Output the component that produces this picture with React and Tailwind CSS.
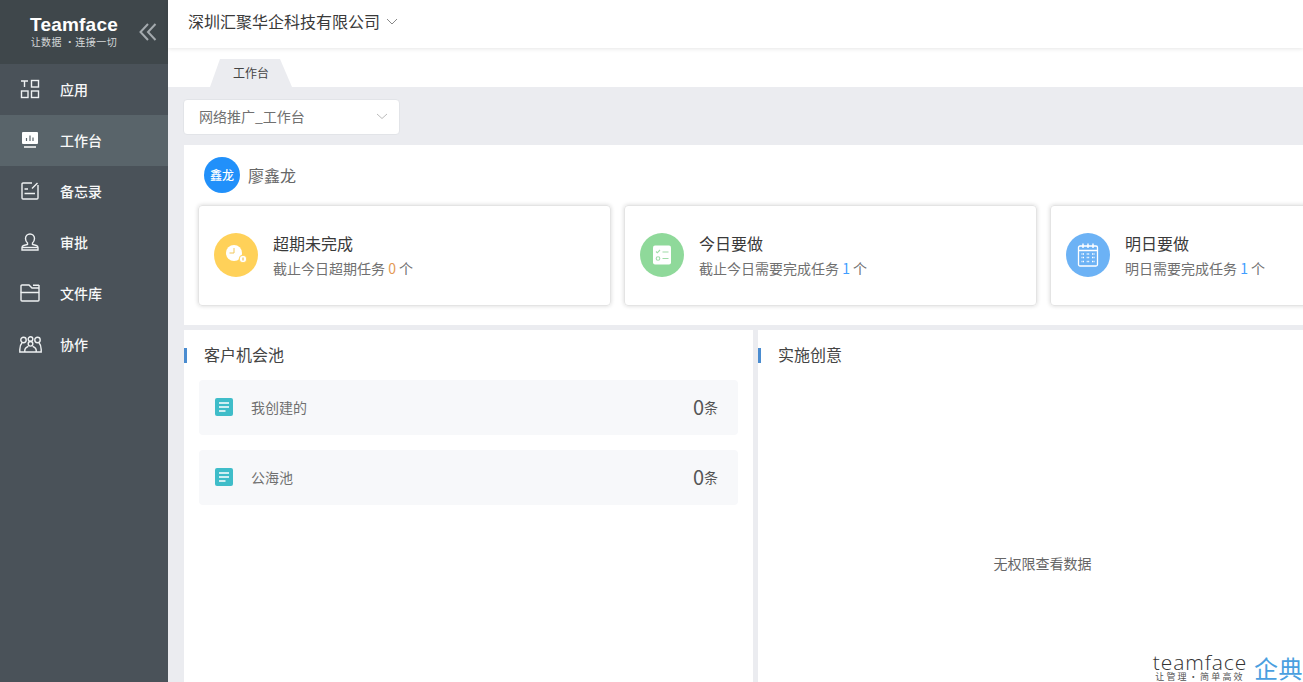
const cjk = { fontFamily: '"Noto Sans CJK SC", "Noto Sans", sans-serif' };

const s = { fill: 'none', stroke: '#eef1f2', strokeWidth: 1.4 };

const icons = {
  app: (
    <svg width="20" height="20" viewBox="0 0 20 20" {...s}>
      <path d="M1 2h7M4.500 2v6" />
      <rect x="11.500" y="1.500" width="7" height="6.500" />
      <rect x="1.500" y="12" width="6.500" height="6.500" />
      <rect x="11.500" y="12" width="7" height="6.500" />
    </svg>
  ),
  desk: (
    <svg width="18" height="18" viewBox="0 0 18 18">
      <rect x="1" y="1" width="16" height="12" rx="1" fill="#fff" />
      <path d="M5.500 10V7M9 10V4.500M12 10V6.500" stroke="#59646a" strokeWidth="1.200" />
      <path d="M3 16h12" stroke="#fff" strokeWidth="1.500" />
    </svg>
  ),
  memo: (
    <svg width="18" height="18" viewBox="0 0 18 18" {...s}>
      <path d="M11 1H2a1 1 0 0 0-1 1v14a1 1 0 0 0 1 1h14a1 1 0 0 0 1-1V3" />
      <path d="M16.500 1 11 6.500M3.500 7H7M3.500 11.500H14" />
    </svg>
  ),
  approve: (
    <svg width="18" height="18" viewBox="0 0 18 18" {...s}>
      <path d="M6.500 11.500V10C5.200 8.800 4.500 7.300 4.500 5.500a4.500 4.500 0 0 1 9 0c0 1.800-.7 3.300-2 4.500v1.500l3.800 1c1 .3 1.700 1 1.700 2V17H1v-2.500c0-1 .7-1.700 1.700-2l3.800-1z" />
      <path d="M1 14.500h16" />
    </svg>
  ),
  folder: (
    <svg width="20" height="18" viewBox="0 0 20 18" {...s}>
      <path d="M1 8.500V2a1 1 0 0 1 1-1h7l3 3h7M19 1.200h-6" />
      <path d="M19 1v15a1 1 0 0 1-1 1H2a1 1 0 0 1-1-1V8.500h18" />
    </svg>
  ),
  team: (
    <svg width="23" height="17" viewBox="0 0 23 17" {...s}>
      <circle cx="4.500" cy="4" r="2.700" />
      <circle cx="11.500" cy="3" r="2.300" />
      <circle cx="11.500" cy="7.800" r="2.300" />
      <circle cx="18.500" cy="4" r="2.700" />
      <path d="M3 6.800C1.500 8.500.8 11 .8 13.500V16h5M20 6.800c1.500 1.700 2.200 4.200 2.200 6.700V16h-5M5.800 16v-2c0-2 2-3 3.500-3.800M17.200 16v-2c0-2-2-3-3.500-3.800M5.800 16h11.400" />
    </svg>
  ),
};

const menu = [
  ['应用', icons.app],
  ['工作台', icons.desk, true],
  ['备忘录', icons.memo],
  ['审批', icons.approve],
  ['文件库', icons.folder],
  ['协作', icons.team],
];

const Clock = () => (
  <svg width="24" height="24" viewBox="0 0 24 24">
    <circle cx="10" cy="10" r="8" fill="#fff" />
    <path d="M10 5v5H5.500" stroke="#f1c65a" strokeWidth="1" fill="none" />
    <circle cx="19" cy="16" r="3.800" fill="#fff" stroke="#ffd159" strokeWidth="1" />
    <path d="M19 14.500v3" stroke="#e3b13d" strokeWidth="1" />
  </svg>
);

const Todo = () => (
  <svg width="24" height="24" viewBox="0 0 24 24">
    <rect x="3" y="2.500" width="18" height="19" rx="2" fill="#fff" />
    <path d="M6 8.500l1.300 1.300L10 7M12.500 9h6M12.500 15.500h6" stroke="#9fdca8" strokeWidth="1.100" fill="none" />
    <circle cx="8" cy="15.500" r="1.800" fill="none" stroke="#9fdca8" strokeWidth="1.100" />
  </svg>
);

const Calendar = () => (
  <svg width="24" height="26" viewBox="0 0 24 26" fill="none" stroke="#fff">
    <rect x="2.500" y="4" width="19" height="20" rx="1.500" strokeWidth="1.300" />
    <path d="M2.500 8.500h19M7 1.500V6M12 1.500V6M17 1.500V6" strokeWidth="1.400" />
    <path d="M5.500 12h2.500M10.700 12h2.500M16 12h2.500M5.500 15.500h2.500M10.700 15.500h2.500M16 15.500h2.500M5.500 19.500h2.500M10.700 19.500h2.500M16 19.500h2.500" strokeWidth="1.600" strokeDasharray="1 0.500" />
  </svg>
);

const tasks = [
  { title: '超期未完成', text: '截止今日超期任务', num: '0', color: 'text-[#e49a55]', bg: 'bg-[#ffd159]', icon: <Clock /> },
  { title: '今日要做', text: '截止今日需要完成任务', num: '1', color: 'text-[#409eff]', bg: 'bg-[#8fd99a]', icon: <Todo /> },
  { title: '明日要做', text: '明日需要完成任务', num: '1', color: 'text-[#409eff]', bg: 'bg-[#6cb2f5]', icon: <Calendar /> },
];

const DocIcon = () => (
  <svg width="18" height="18" viewBox="0 0 18 18" className="shrink-0">
    <rect width="18" height="18" rx="2" fill="#3fbdc9" />
    <path d="M4 5h10M4 9h10M4 13h6.500" stroke="#fff" strokeWidth="1.700" />
  </svg>
);

const PoolRow = ({ label }) => (
  <div className="flex h-[55px] items-center rounded-sm bg-[#f7f8fa] pb-[1px] pl-[16px] pr-[20px]">
    <DocIcon />
    <span className="ml-[18px] flex-1 text-[14px] text-[#707070]">{label}</span>
    <span className="text-[20px] leading-none text-[#555]">0</span>
    <span className="text-[14px] text-[#555]">条</span>
  </div>
);

const SectionTitle = ({ children }) => (
  <div className="flex h-[50px] shrink-0 items-center">
    <span className="h-[15px] w-[3px] bg-[#4a8cd0]" />
    <span className="ml-[17px] pb-[2px] text-[16px] text-[#444]">{children}</span>
  </div>
);

export default function App() {
  return (
    <div className="relative flex h-[682px] w-[1303px] overflow-hidden bg-[#ebecf0]" style={cjk}>
      <aside className="flex w-[168px] shrink-0 flex-col bg-[#4a5259]">
        <div className="flex h-[64px] shrink-0 items-center bg-[#3f474b] pl-[30px]">
          <div className="flex w-[88px] flex-col items-center">
            <span className="text-[19px] font-bold leading-[20px] tracking-[0.2px] text-white" style={{ fontFamily: '"Liberation Sans", sans-serif' }}>Teamface</span>
            <span className="whitespace-nowrap text-[10px] leading-[14px] tracking-[0.5px] text-[#d5d8da]">让数据 •连接一切</span>
          </div>
          <svg className="ml-[21px]" width="18" height="18" viewBox="0 0 18 18" fill="none" stroke="#a4aaae" strokeWidth="2">
            <path d="M9 1 1.500 9 9 17M16.500 1 9 9l7.500 8" />
          </svg>
        </div>
        {menu.map(([label, icon, active]) => (
          <div key={label} className={`flex h-[51px] items-center pb-[1px] ${active ? 'bg-[#59646a]' : ''}`}>
            <span className="flex w-[60px] justify-center">{icon}</span>
            <span className="text-[14px] font-medium text-[#f7f8f8]">{label}</span>
          </div>
        ))}
      </aside>

      <main className="flex min-w-0 flex-1 flex-col">
        <header className="z-10 flex h-[48px] shrink-0 items-center bg-white pb-[7px] pl-[20px] shadow-[0_1px_4px_rgba(0,0,0,0.1)]">
          <span className="text-[16px] text-[#3a3a3a]">深圳汇聚华企科技有限公司</span>
          <svg className="ml-[6px]" width="12" height="12" viewBox="0 0 12 12" fill="none" stroke="#888" strokeWidth="1">
            <path d="M1 4l5 5 5-5" />
          </svg>
        </header>

        <div className="flex h-[39px] shrink-0 items-end bg-white pl-[42px]">
          <div className="flex h-[28px] w-[82px] items-center justify-center bg-[#ebecf0] text-[12px] text-[#444] [clip-path:polygon(10px_0,70px_0,100%_100%,0_100%)]">
            工作台
          </div>
        </div>

        <div className="flex min-h-0 flex-1 flex-col pl-[15px]">
          <div className="mt-[12px] flex h-[36px] w-[217px] shrink-0 items-center justify-between rounded border border-[#e2e4e8] bg-white pb-[2px] pl-[15px] pr-[11px] text-[14px] text-[#707070]">
            <span>网络推广_工作台</span>
            <svg width="12" height="12" viewBox="0 0 12 12" fill="none" stroke="#bbb" strokeWidth="1">
              <path d="M1 4l5 4.500L11 4" />
            </svg>
          </div>

          <section className="mt-[10px] ml-[1px] h-[180px] shrink-0 overflow-hidden bg-white pl-[14px]">
            <div className="flex h-[60px] items-center pl-[6px]">
              <span className="flex h-[36px] w-[36px] items-center justify-center rounded-full bg-[#2190fa] text-[12px] font-medium text-white">鑫龙</span>
              <span className="ml-[8px] text-[16px] text-[#666]">廖鑫龙</span>
            </div>
            <div className="flex gap-[13px]">
              {tasks.map((t) => (
                <div key={t.title} className="flex h-[101px] w-[413px] shrink-0 items-center rounded border border-[#e4e4e4] pl-[15px] shadow-[0_0_4px_rgba(0,0,0,0.16)]">
                  <span className={`mb-[1px] flex h-[44px] w-[44px] items-center justify-center rounded-full ${t.bg}`}>{t.icon}</span>
                  <div className="ml-[15px] pb-[3px]">
                    <div className="pb-[1px] text-[16px] leading-[24px] text-[#3a3a3a]">{t.title}</div>
                    <div className="mt-[2px] text-[14px] leading-[20px] text-[#707070]">
                      {t.text} <span className={`text-[14px] ${t.color}`}>{t.num}</span> 个
                    </div>
                  </div>
                </div>
              ))}
            </div>
          </section>

          <div className="mt-[5px] ml-[1px] flex min-h-0 flex-1 gap-[5px]">
            <section className="w-[569px] shrink-0 bg-white">
              <SectionTitle>客户机会池</SectionTitle>
              <div className="flex flex-col gap-[15px] pl-[15px] pr-[15px]">
                <PoolRow label="我创建的" />
                <PoolRow label="公海池" />
              </div>
            </section>
            <section className="flex w-[569px] shrink-0 flex-col bg-white">
              <SectionTitle>实施创意</SectionTitle>
              <div className="flex h-[366px] shrink-0 items-center justify-center text-[14px] text-[#666]">无权限查看数据</div>
            </section>
          </div>
        </div>
      </main>

      <div className="absolute bottom-0 right-0 flex items-end">
        <div className="flex w-[96px] flex-col items-center">
          <span className="mb-[1px] text-[21px] leading-[17px] tracking-[0.9px] text-[#333]" style={{ fontFamily: '"Open Sans", sans-serif', fontWeight: 300 }}>teamface</span>
          <span className="whitespace-nowrap text-[9px] leading-[10px] tracking-[2.2px] text-[#555]">让管理•简单高效</span>
        </div>
        <span className="mb-[2px] ml-[6px] text-[24px] leading-[25px] tracking-[0.5px] text-[#4a9fe0]">企典</span>
      </div>
    </div>
  );
}
